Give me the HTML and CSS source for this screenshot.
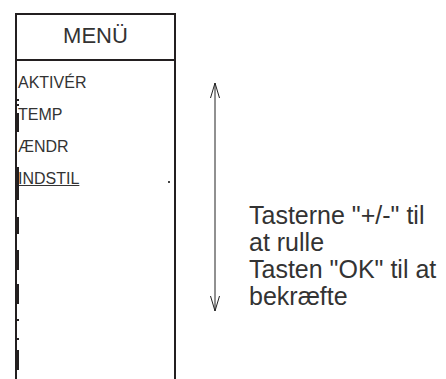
FILE: index.html
```html
<!DOCTYPE html>
<html>
<head>
<title>Menu</title>
<link rel="stylesheet" href="styles.css">
</head>
<body>

<div class="page">

	<div class="menu">
		<div class="menu-title">MENÜ</div>
		<ul class="menu-items">
			<li>AKTIVÉR</li>
			<li>TEMP</li>
			<li>ÆNDR</li>
			<li class="current">INDSTIL</li>
		</ul>

		<!-- scan marks along the left edge -->
		<span class="mark dot" style="top: 84px"></span>
		<span class="mark dot" style="top: 89px"></span>
		<span class="mark" style="top: 98px; height: 19px"></span>
		<span class="mark" style="top: 152px; height: 33px"></span>
		<span class="mark" style="top: 202px; height: 17px"></span>
		<span class="mark" style="top: 235px; height: 20px"></span>
		<span class="mark" style="top: 269px; height: 20px"></span>
		<span class="mark dot" style="top: 304px"></span>
		<span class="mark dot" style="top: 323px"></span>
		<span class="mark" style="top: 335px; height: 20px"></span>
		<span class="speck"></span>
	</div>

	<svg class="arrow" width="12" height="228" viewBox="0 0 12 228">
		<path d="M6 0 V228 M1.5 15 L6 0 L10.5 15 M1.5 213 L6 228 L10.5 213" fill="none" stroke="#222" stroke-width="1"/>
	</svg>

	<p class="hint">Tasterne "+/-" til<br>at rulle<br>Tasten "OK" til at<br>bekræfte</p>

</div>

</body>
</html>
```

FILE: styles.css
```css
html, body {
	margin: 0;
	background: #fff;
}

body {
	font-family: "Liberation Sans", Arial, sans-serif;
	color: #2a2a2a;
	overflow: hidden;
}

.page {
	display: flex;
	align-items: flex-start;
	height: 379px;
}

.menu {
	position: relative;
	margin: 13px 0 0 15px;
	width: 157px;
	height: 380px;
	border: 2px solid #231f20;
	border-bottom: none;
}

.menu-title {
	height: 44px;
	line-height: 42px;
	font-size: 22px;
	text-align: center;
	color: #333;
	border-bottom: 2px solid #231f20;
}

.menu-items {
	list-style: none;
	margin: 0;
	padding: 6px 0 0 1px;
	font-size: 16px;
	line-height: 32px;
	color: #333;
}

.current {
	text-decoration: underline;
}

.mark {
	position: absolute;
	left: 0;
	width: 2px;
	background: #231f20;
}

.mark.dot {
	height: 2px;
}

.speck {
	position: absolute;
	left: 151px;
	top: 166px;
	width: 2px;
	height: 2px;
	background: #444;
}

.arrow {
	margin: 83px 0 0 33px;
	flex: none;
}

.hint {
	margin: 202px 0 0 28px;
	font-size: 25px;
	line-height: 27px;
	white-space: nowrap;
	color: #333;
}
```
